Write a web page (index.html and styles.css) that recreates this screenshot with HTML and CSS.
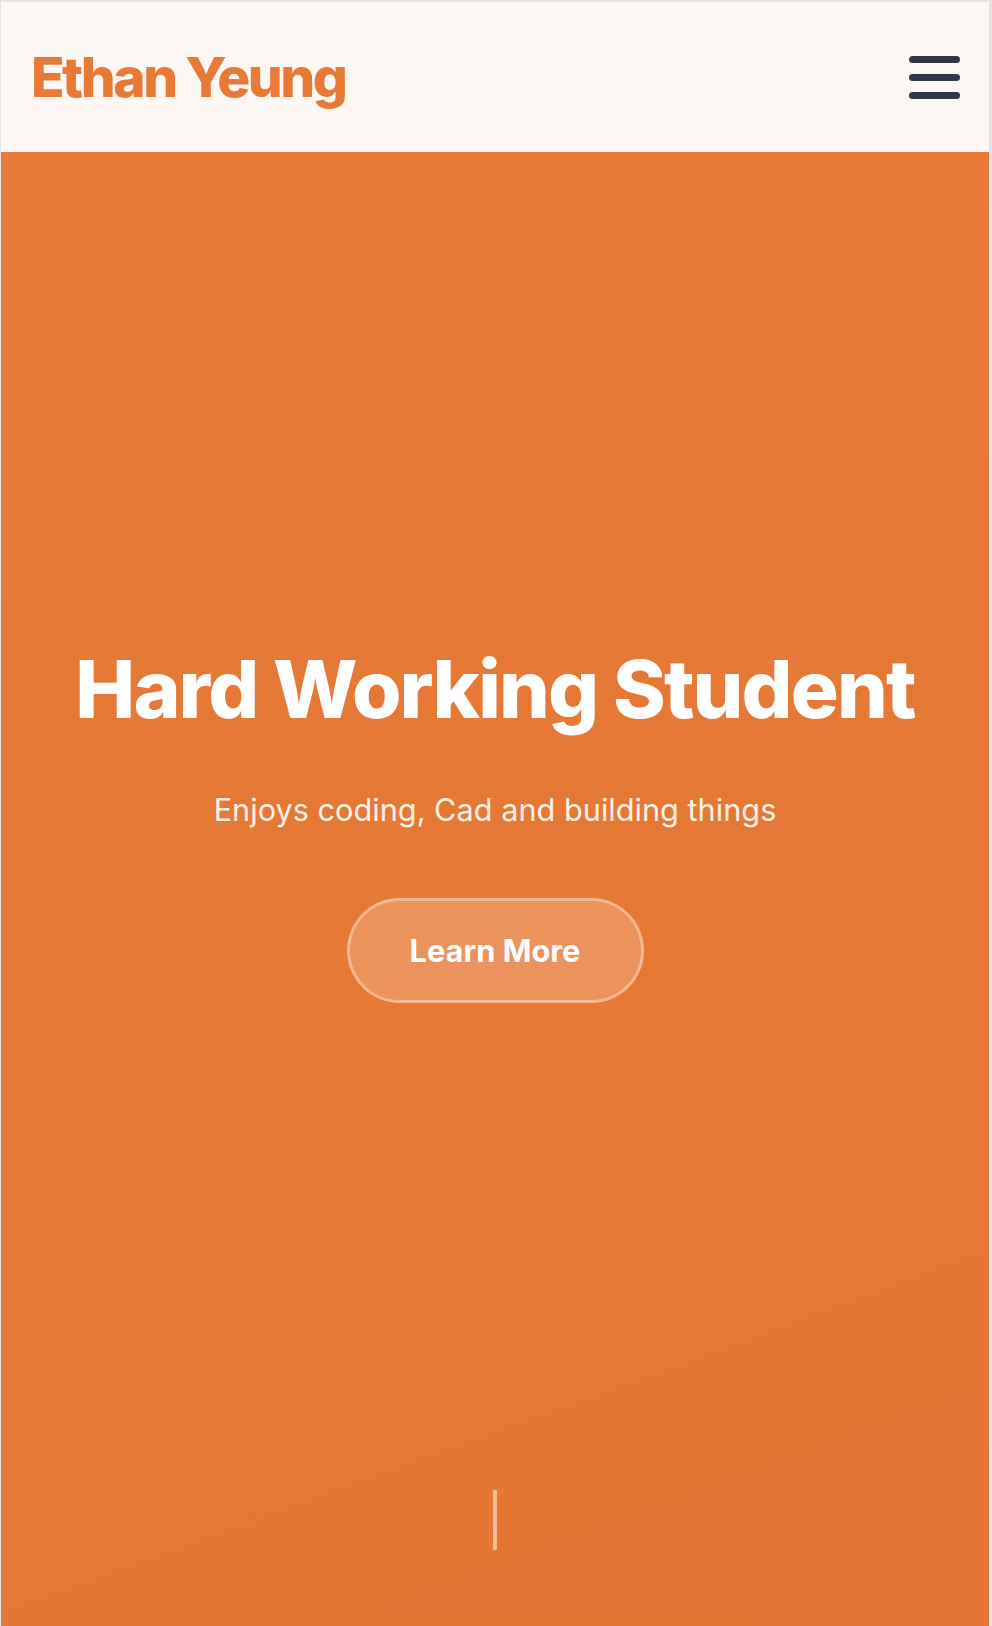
FILE: index.html
```html
<!DOCTYPE html>
<html lang="en">
<head>
<meta charset="utf-8">
<title>Ethan Yeung</title>
<link rel="stylesheet" href="styles.css">
</head>
<body>
<header class="site-header">
  <a class="logo" href="#">Ethan Yeung</a>
  <button class="menu-btn" aria-label="Menu">
    <span class="bar"></span>
    <span class="bar"></span>
    <span class="bar"></span>
  </button>
</header>
<main class="hero">
  <h1 class="hero-title">Hard Working Student</h1>
  <p class="hero-sub">Enjoys coding, Cad and building things</p>
  <a class="hero-btn" href="#">Learn More</a>
  <div class="scroll-line"></div>
</main>
</body>
</html>
```
FILE: styles.css
```css
html {
  background: #e4e4e4;
}
body {
  margin: 2px 3px 0 1px;
  font-family: Inter, "Noto Sans", sans-serif;
  background: #fdf8f4;
  overflow: hidden;
}
.site-header {
  height: 150px;
  display: flex;
  align-items: center;
  justify-content: space-between;
  padding: 0 29px 0 30px;
  background: #fdf8f4;
}
.logo {
  color: #e87a36;
  font-weight: 800;
  font-size: 55px;
  letter-spacing: -0.045em;
  text-decoration: none;
}
.menu-btn {
  background: none;
  border: 0;
  padding: 0;
  display: flex;
  flex-direction: column;
  gap: 11px;
}
.bar {
  display: block;
  width: 51px;
  height: 7px;
  border-radius: 4px;
  background: #2f3749;
}
.hero {
  height: 1474px;
  box-sizing: border-box;
  padding-top: 489px;
  display: flex;
  flex-direction: column;
  align-items: center;
  background: linear-gradient(160deg, #e87b37 0%, #e57534 100%);
}
.hero-title {
  margin: 0;
  color: #fff;
  font-size: 80px;
  line-height: 96px;
  font-weight: 800;
  letter-spacing: -0.023em;
}
.hero-sub {
  margin: 50px 0 0;
  color: #fdf1e6;
  font-size: 30.7px;
  line-height: 45px;
}
.hero-btn {
  margin-top: 66px;
  width: 297px;
  height: 105px;
  box-sizing: border-box;
  display: flex;
  align-items: center;
  justify-content: center;
  border: 3px solid rgba(255, 255, 255, 0.35);
  border-radius: 53px;
  background: rgba(255, 255, 255, 0.2);
  color: #fff;
  font-size: 30.8px;
  font-weight: 700;
  text-decoration: none;
}
.scroll-line {
  margin-top: auto;
  margin-bottom: 76px;
  width: 4px;
  height: 60px;
  background: rgba(255, 255, 255, 0.5);
}
```
